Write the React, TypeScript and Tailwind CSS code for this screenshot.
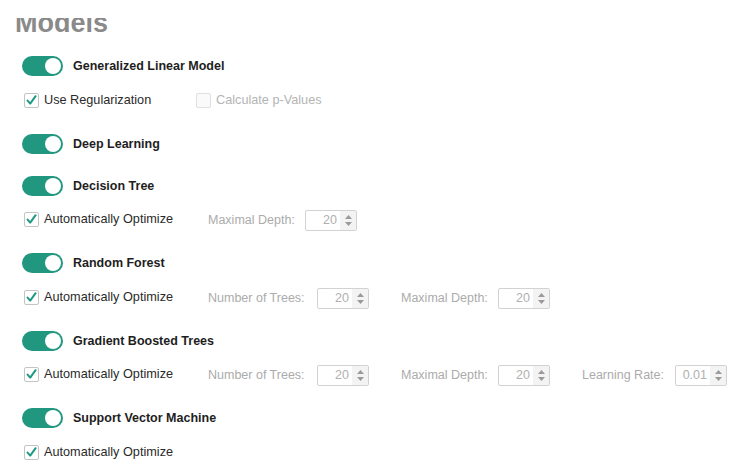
import React from "react";

const FONT = { fontFamily: '"Liberation Sans", Arial, Helvetica, sans-serif' };

function Toggle() {
  return (
    <div className="relative h-[20px] w-[41px] shrink-0 rounded-full bg-[#21977f]">
      <div className="absolute right-[2px] top-[2px] h-[16px] w-[16px] rounded-full bg-white" />
    </div>
  );
}

function ModelHeader({ name, className = "" }: { name: string; className?: string }) {
  return (
    <div className={`flex h-[20px] items-center gap-[10px] pl-[22px] ${className}`}>
      <Toggle />
      <span className="text-[12.5px] font-bold text-[#1e1e1e]">{name}</span>
    </div>
  );
}

function CheckBox({ checked, label, disabled, width }: { checked?: boolean; label: string; disabled?: boolean; width: string }) {
  return (
    <div className={`flex shrink-0 items-center gap-[5px] ${width}`}>
      <div
        className={`flex h-[15px] w-[15px] items-center justify-center rounded-[2px] border ${
          disabled ? "border-[#e0e0e0] bg-[#fafafa]" : "border-[#c4c4c4] bg-white"
        }`}
      >
        {checked && (
          <svg width="11" height="11" viewBox="0 0 11 11">
            <path d="M1.6 5.6 L4.2 8.6 L9.6 1.2" fill="none" stroke="#1f9a82" strokeWidth="2" strokeLinecap="round" strokeLinejoin="round" />
          </svg>
        )}
      </div>
      <span className={`text-[12.7px] ${disabled ? "text-[#b4b4b4]" : "text-[#2a2a2a]"}`}>{label}</span>
    </div>
  );
}

function SpinField({ label, value, labelWidth }: { label: string; value: string; labelWidth: string }) {
  return (
    <div className="flex shrink-0 items-center">
      <span className={`text-[12.5px] text-[#ababab] ${labelWidth}`}>{label}</span>
      <div className="flex h-[21px] w-[52px] overflow-hidden rounded-[2px] border border-[#d2d2d2] bg-white">
        <div className="flex flex-1 items-center justify-end pr-[3px] text-[12.5px] text-[#b0b0b0]">{value}</div>
        <div className="flex w-[16px] flex-col items-center justify-center gap-[3px] bg-[#f3f3f3]">
          <svg width="7" height="4" viewBox="0 0 7 4">
            <path d="M0 4 L3.5 0 L7 4 Z" fill="#9a9a9a" />
          </svg>
          <svg width="7" height="4" viewBox="0 0 7 4">
            <path d="M0 0 L7 0 L3.5 4 Z" fill="#9a9a9a" />
          </svg>
        </div>
      </div>
    </div>
  );
}

function OptionRow({ children, className = "" }: { children: React.ReactNode; className?: string }) {
  return <div className={`flex h-[22px] items-center pl-[24px] ${className}`}>{children}</div>;
}

export default function App() {
  return (
    <div className="h-[476px] w-[743px] overflow-hidden bg-white" style={FONT}>
      {/* section title, partly scrolled under the top edge */}
      <div className="mt-[18px] h-[15px] overflow-hidden pl-[15px]">
        <div className="-mt-[8px] text-[27px] font-bold leading-[27px] text-[#8a8a8a]">Models</div>
      </div>

      <ModelHeader name="Generalized Linear Model" className="mt-[23px]" />
      <OptionRow className="mt-[14px]">
        <CheckBox checked label="Use Regularization" width="w-[172px]" />
        <CheckBox disabled label="Calculate p-Values" width="w-[140px]" />
      </OptionRow>

      <ModelHeader name="Deep Learning" className="mt-[22px]" />

      <ModelHeader name="Decision Tree" className="mt-[22px]" />
      <OptionRow className="mt-[13px]">
        <CheckBox checked label="Automatically Optimize" width="w-[184px]" />
        <SpinField label="Maximal Depth:" value="20" labelWidth="w-[97px]" />
      </OptionRow>

      <ModelHeader name="Random Forest" className="mt-[22px]" />
      <OptionRow className="mt-[14px]">
        <CheckBox checked label="Automatically Optimize" width="w-[184px]" />
        <SpinField label="Number of Trees:" value="20" labelWidth="w-[109px]" />
        <div className="w-[32px] shrink-0" />
        <SpinField label="Maximal Depth:" value="20" labelWidth="w-[97px]" />
      </OptionRow>

      <ModelHeader name="Gradient Boosted Trees" className="mt-[22px]" />
      <OptionRow className="mt-[13px]">
        <CheckBox checked label="Automatically Optimize" width="w-[184px]" />
        <SpinField label="Number of Trees:" value="20" labelWidth="w-[109px]" />
        <div className="w-[32px] shrink-0" />
        <SpinField label="Maximal Depth:" value="20" labelWidth="w-[97px]" />
        <div className="w-[32px] shrink-0" />
        <SpinField label="Learning Rate:" value="0.01" labelWidth="w-[93px]" />
      </OptionRow>

      <ModelHeader name="Support Vector Machine" className="mt-[22px]" />
      <OptionRow className="mt-[14px]">
        <CheckBox checked label="Automatically Optimize" width="w-[184px]" />
      </OptionRow>
    </div>
  );
}
